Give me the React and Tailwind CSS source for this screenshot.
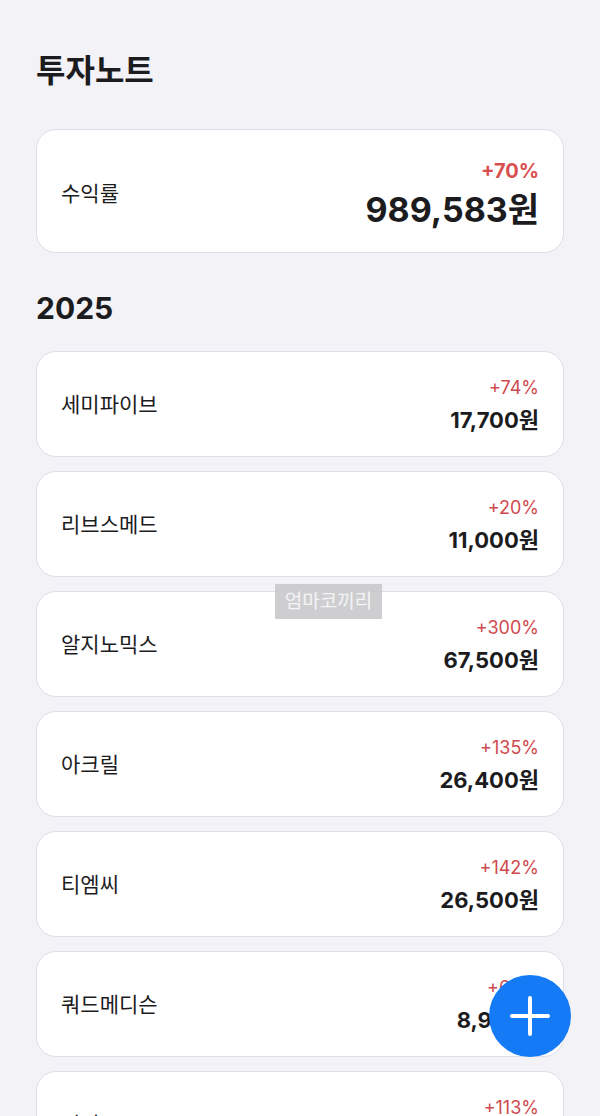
import React from 'react';

const items = [
  { name: '세미파이브', rate: '+74%', amount: '17,700원' },
  { name: '리브스메드', rate: '+20%', amount: '11,000원' },
  { name: '알지노믹스', rate: '+300%', amount: '67,500원' },
  { name: '아크릴', rate: '+135%', amount: '26,400원' },
  { name: '티엠씨', rate: '+142%', amount: '26,500원' },
  { name: '쿼드메디슨', rate: '+69%', amount: '8,970원' },
  { name: '이지스', rate: '+113%', amount: '21,300원' },
];

const font = { fontFamily: 'Inter, "Noto Sans CJK KR", sans-serif' };

const ItemCard = ({ name, rate, amount }) => (
  <div className="flex h-[106px] items-center justify-between rounded-[20px] border border-[#dedee6] bg-white px-6">
    <span className="text-[21px] leading-none text-[#1c1c1e]">{name}</span>
    <div className="flex flex-col items-end gap-[12px]">
      <span className="text-[18px] leading-[20px] text-[#cf4a4e]">{rate}</span>
      <span className="text-[22px] font-bold leading-[20px] text-[#1c1c1e]">{amount}</span>
    </div>
  </div>
);

export default function App() {
  return (
    <div className="relative min-h-screen bg-[#f2f2f7] px-9 pb-10 pt-[53px]" style={font}>
      <h1 className="text-[32px] font-bold leading-[36px] text-[#1c1c1e]">투자노트</h1>

      <div className="mt-10 flex h-[124px] items-center justify-between rounded-[20px] border border-[#dedee6] bg-white px-6">
        <span className="mt-[4px] text-[21px] leading-none text-[#1c1c1e]">수익률</span>
        <div className="flex flex-col items-end gap-[17px]">
          <span className="text-[20px] font-bold leading-[20px] text-[#d94f4f]">+70%</span>
          <span className="text-[34px] font-bold leading-[24px] text-[#1c1c1e]">989,583원</span>
        </div>
      </div>

      <h2 className="mt-[37px] text-[30px] font-bold leading-[36px] text-[#1c1c1e]">2025</h2>

      <div className="mt-[25px] flex flex-col gap-[14px]">
        {items.map((it) => (
          <ItemCard key={it.name} {...it} />
        ))}
      </div>

      <div className="absolute left-[275px] top-[584px] flex h-[35px] w-[107px] items-center justify-center bg-[#c9c9cc]/90">
        <span className="text-[19px] leading-none text-[#f4f4f6]">엄마코끼리</span>
      </div>

      <button className="fixed bottom-[59px] right-[29px] flex h-[82px] w-[82px] items-center justify-center rounded-full bg-[#157af6]">
        <svg width="44" height="44" viewBox="0 0 44 44" fill="none" stroke="white" strokeWidth="4" strokeLinecap="round">
          <path d="M22 4v36M4 22h36" />
        </svg>
      </button>
    </div>
  );
}
